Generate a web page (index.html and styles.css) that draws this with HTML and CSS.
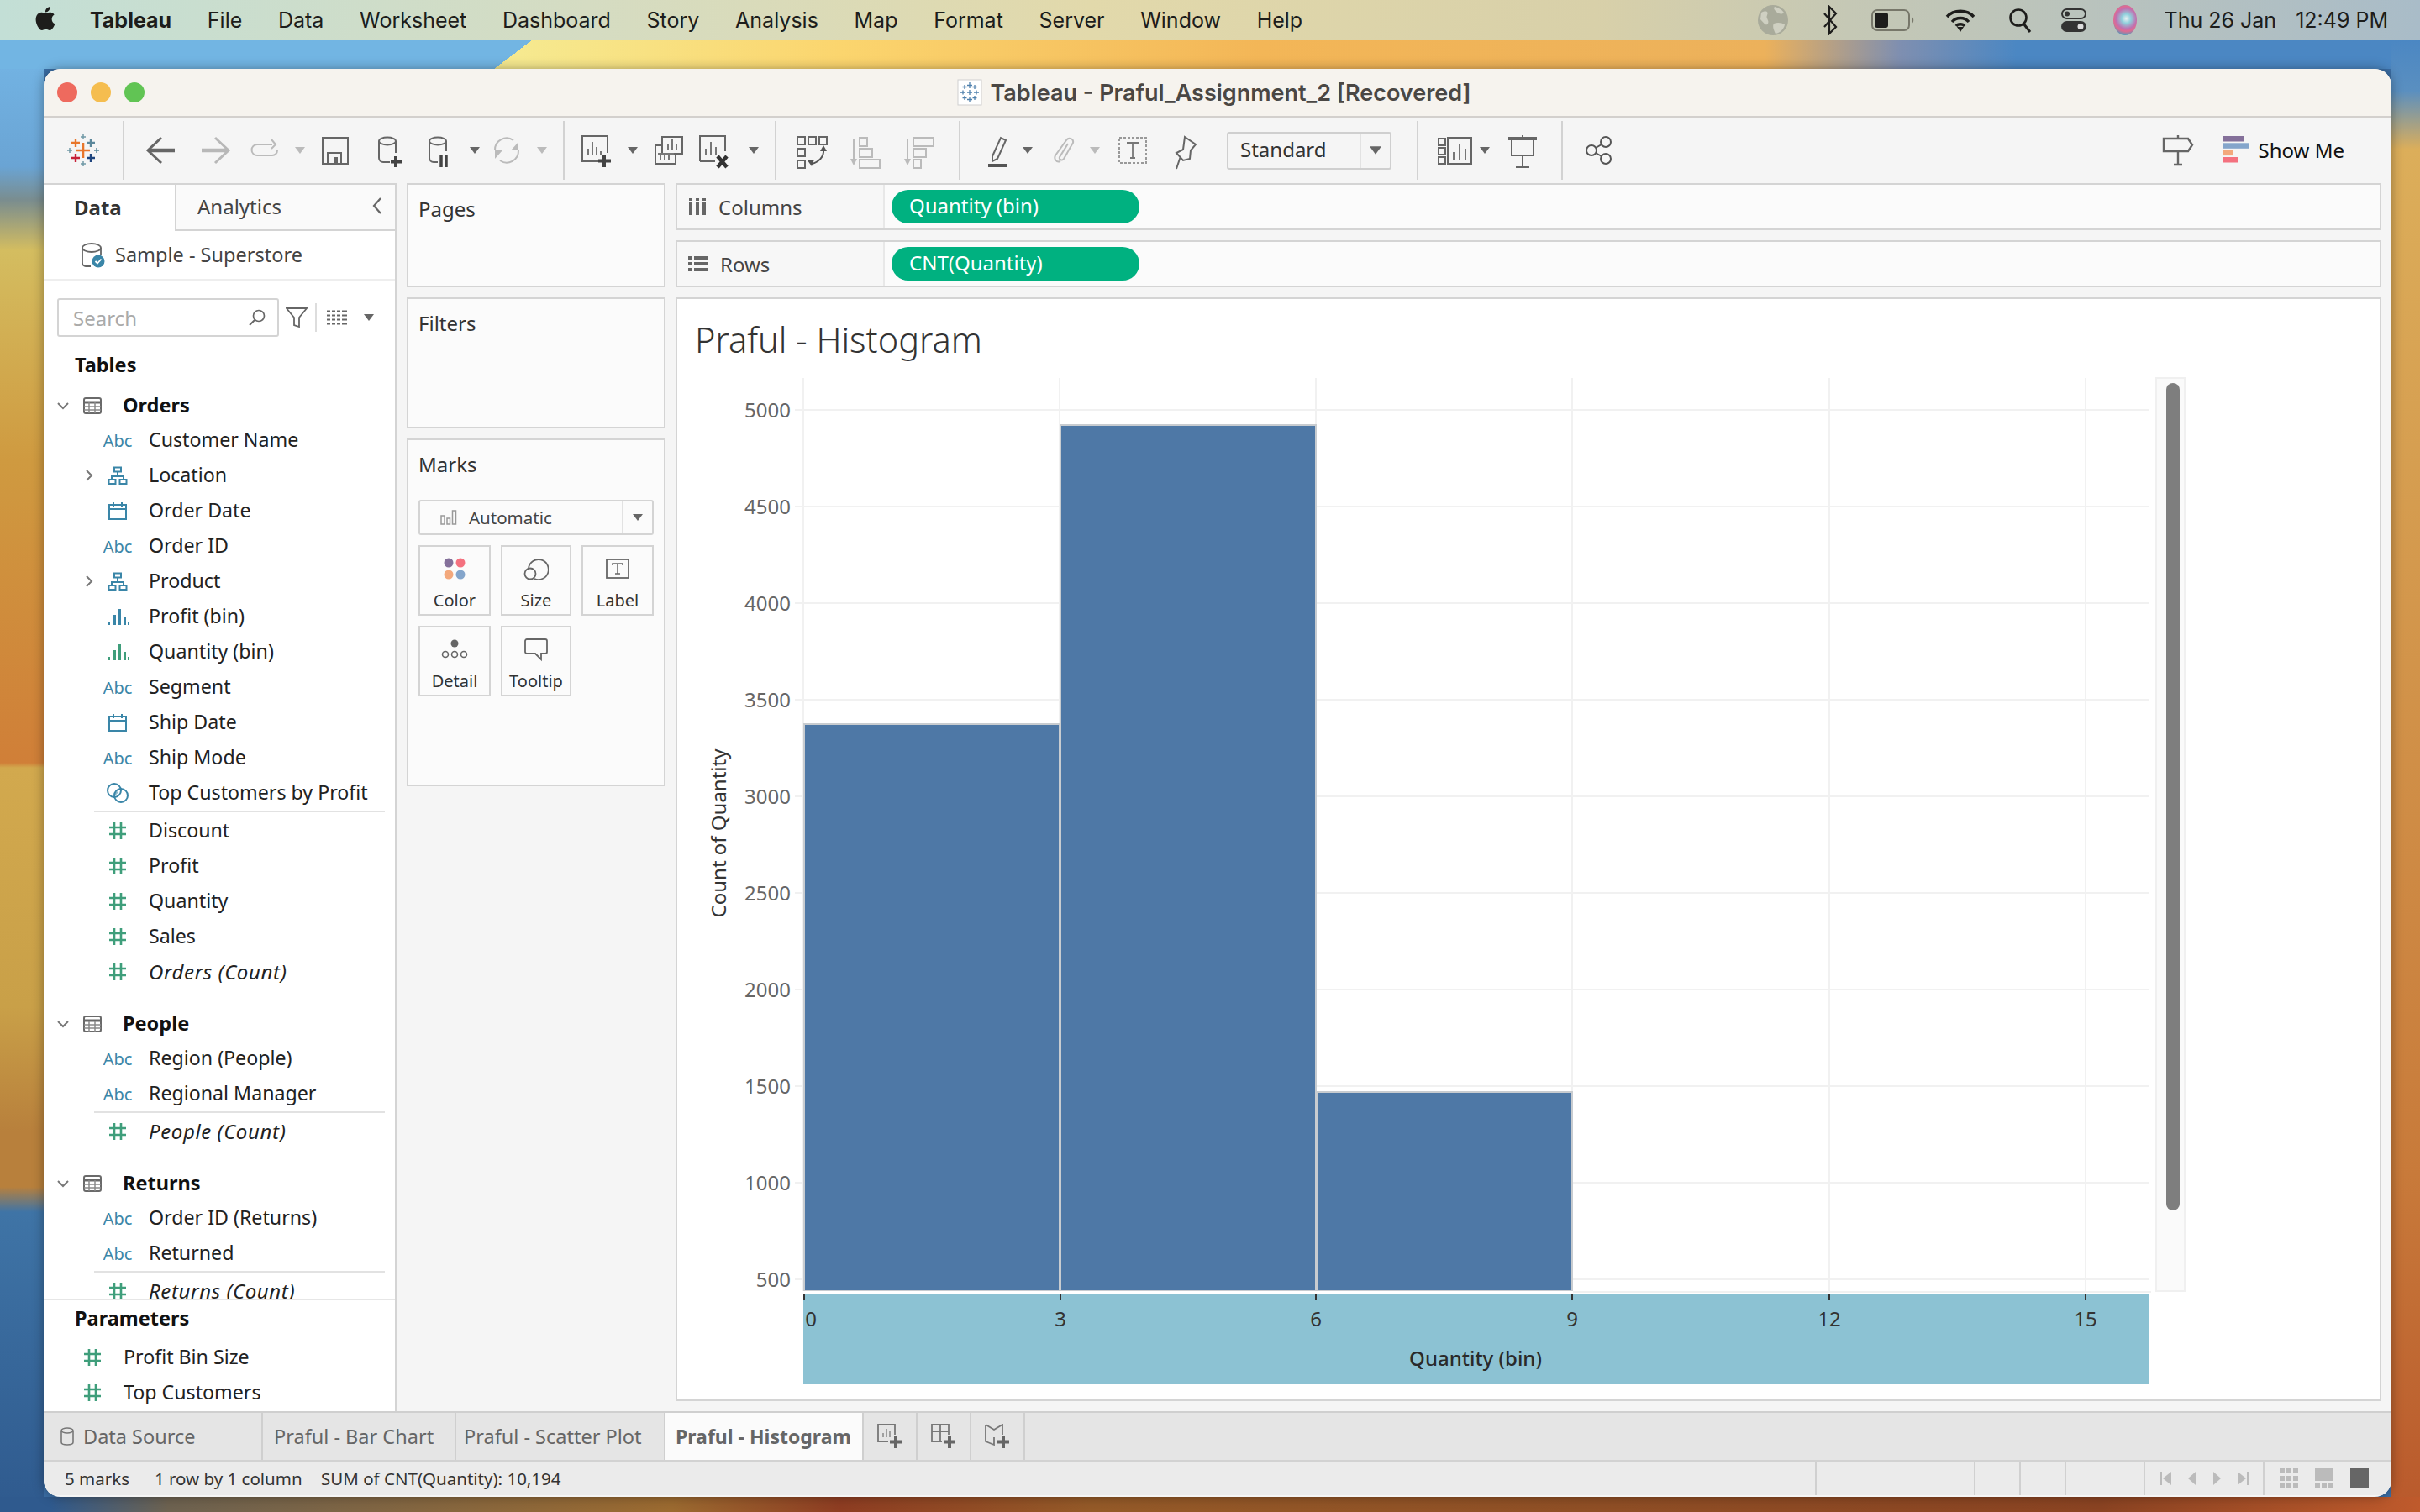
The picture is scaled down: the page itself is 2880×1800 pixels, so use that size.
FILE: index.html
```html
<!DOCTYPE html>
<html>
<head>
<meta charset="utf-8">
<title>Tableau - Praful_Assignment_2 [Recovered]</title>
<link rel="stylesheet" href="styles.css">
</head>
<body>

<!-- shared icons -->
<svg class="defs" width="0" height="0">
	<symbol id="hash" viewBox="0 0 24 24"><path d="M8 2v20M16 2v20M2 8h20M2 16h20" fill="none" stroke="#3f9e7b" stroke-width="2.6"/></symbol>
	<symbol id="tree" viewBox="0 0 24 24"><path d="M12 8v5M5 17v-4h14v4" fill="none" stroke="#3a86a8" stroke-width="2"/><path d="M8 2.5h8v5H8zM1.5 17h8v5h-8zM14.5 17h8v5h-8z" fill="none" stroke="#3a86a8" stroke-width="2"/></symbol>
	<symbol id="cal" viewBox="0 0 24 24"><path d="M2 5h20v17H2zM2 10h20M7 2v5M17 2v5" fill="none" stroke="#3a86a8" stroke-width="2"/></symbol>
	<symbol id="binblue" viewBox="0 0 28 20"><path d="M2 16v4h3v-4zM9 8v12h3V8zM15 1v19h3V1zM21 10v10h3V10zM26 16v4h2v-4z" fill="#3a86a8"/></symbol>
	<symbol id="bingreen" viewBox="0 0 28 20"><path d="M2 16v4h3v-4zM9 8v12h3V8zM15 1v19h3V1zM21 10v10h3V10zM26 16v4h2v-4z" fill="#3f9e7b"/></symbol>
	<symbol id="sets" viewBox="0 0 28 24"><path d="M15 10a7 7 0 0 0-6 5 7 7 0 0 0 6-5z" fill="#8fb9cc"/><circle cx="10" cy="9" r="8" fill="none" stroke="#3a86a8" stroke-width="2"/><circle cx="18" cy="15" r="8" fill="none" stroke="#3a86a8" stroke-width="2"/></symbol>
	<symbol id="table" viewBox="0 0 22 20"><rect x="1" y="1" width="20" height="18" rx="2" fill="none" stroke="#6a6a6a" stroke-width="2"/><path d="M1 6h20" stroke="#6a6a6a" stroke-width="3"/><path d="M1 11h20M1 15h20M7 6v13M14 6v13" stroke="#8a8a8a" stroke-width="1.5"/></symbol>
	<symbol id="chevd" viewBox="0 0 14 10"><path d="M1 2l6 6 6-6" fill="none" stroke="#777" stroke-width="2"/></symbol>
	<symbol id="chevr" viewBox="0 0 10 14"><path d="M2 1l6 6-6 6" fill="none" stroke="#777" stroke-width="2"/></symbol>
	<symbol id="caret" viewBox="0 0 12 10"><path d="M0 1h12L6 9z" fill="#666"/></symbol>
	<symbol id="caretoff" viewBox="0 0 12 10"><path d="M0 1h12L6 9z" fill="#bbb"/></symbol>
</svg>

<header class="menubar">
	<svg class="apple" width="28" height="32" viewBox="0 0 24 24"><path fill="#1d1d1b" d="M12.152 6.896c-.948 0-2.415-1.078-3.96-1.04-2.04.027-3.91 1.183-4.961 3.014-2.117 3.675-.546 9.103 1.519 12.09 1.013 1.454 2.208 3.09 3.792 3.039 1.52-.065 2.09-.987 3.935-.987 1.831 0 2.35.987 3.96.948 1.637-.026 2.676-1.48 3.676-2.948 1.156-1.688 1.636-3.325 1.662-3.415-.039-.013-3.182-1.221-3.22-4.857-.026-3.04 2.48-4.494 2.597-4.559-1.429-2.09-3.623-2.324-4.39-2.376-2-.156-3.675 1.09-4.61 1.09zM15.53 3.83c.843-1.012 1.4-2.427 1.245-3.83-1.207.052-2.662.805-3.532 1.818-.78.896-1.454 2.338-1.273 3.714 1.338.104 2.715-.688 3.559-1.701"/></svg>
	<nav class="menus">
		<b>Tableau</b><span>File</span><span>Data</span><span>Worksheet</span><span>Dashboard</span><span>Story</span><span>Analysis</span><span>Map</span><span>Format</span><span>Server</span><span>Window</span><span>Help</span>
	</nav>
	<div class="tray">
		<svg width="40" height="38" viewBox="-20 -19 40 38"><circle r="18" fill="#a9ab9b"/><path d="M-14-9c6-3 9-1 7 3s3 6 1 10-6-2-9-5zM2-16c4 1 8 3 11 7-3 3-7 1-9-1s-4-4-2-6zM1 4c5-2 9-1 13 1-1 6-6 10-11 11-2-4-4-9-2-12z" fill="#cfd0c2"/></svg>
		<svg class="t-bt" width="18" height="36" viewBox="-9 -18 18 36"><path d="M-7-8L7 8-1 16v-32L7-8-7 8" fill="none" stroke="#1d1d1b" stroke-width="2.2"/></svg>
		<svg class="t-bat" width="52" height="26" viewBox="0 0 52 26"><rect x="1" y="1" width="44" height="24" rx="6" fill="none" stroke="#77776a" stroke-width="2"/><rect x="4" y="4" width="16" height="18" rx="3" fill="#1d1d1b"/><path d="M48 9c3 1 3 7 0 8z" fill="#77776a"/></svg>
		<svg class="t-wifi" width="36" height="28" viewBox="-18 -14 36 28"><path d="M-16-4C-8-13 8-13 16-4M-10 2C-5-4 5-4 10 2M-5 7c2-3 8-3 10 0" fill="none" stroke="#1d1d1b" stroke-width="3.4"/><path d="M0 14l-4-6h8z" fill="#1d1d1b"/></svg>
		<svg class="t-find" width="28" height="30" viewBox="0 0 28 30"><circle cx="12" cy="12" r="9.5" fill="none" stroke="#1d1d1b" stroke-width="2.6"/><path d="M18 19l8 10" stroke="#1d1d1b" stroke-width="3"/></svg>
		<svg class="t-ctl" width="30" height="28" viewBox="0 0 30 28"><rect x="1" y="1" width="28" height="11" rx="5.5" fill="none" stroke="#333" stroke-width="2"/><circle cx="7" cy="6.5" r="3" fill="#333"/><rect x="0" y="15" width="30" height="13" rx="6.5" fill="#333"/><circle cx="23" cy="21.5" r="3.5" fill="#ddd"/></svg>
		<span class="siri"></span>
		<span class="clock">Thu 26 Jan</span>
		<span class="clock c2">12:49 PM</span>
	</div>
</header>

<div class="window">
	<div class="titlebar">
		<div class="lights"><i class="red"></i><i class="amber"></i><i class="green"></i></div>
		<svg class="doc" width="30" height="32" viewBox="-15 -16 30 32"><rect x="-14" y="-15" width="28" height="30" fill="#fff" stroke="#cfcfcf"/><path d="M0-12v7M-3-8.5h6M0 5v7M-3 8.5h6M-8-2.5v5M-11 0h6M8-2.5v5M5 0h6M-6-9v5M-8.5-6.5h5M6-9v5M3.5-6.5h5M-6 4v5M-8.5 6.5h5M6 4v5M3.5 6.5h5M0-3v6M-3 0h6" stroke="#4f81ad" stroke-width="1.3" fill="none"/></svg>
		<span class="wintitle">Tableau - Praful_Assignment_2 [Recovered]</span>
	</div>

	<div class="toolbar">
		<div class="tg tg-logo">
			<svg width="40" height="40" viewBox="-20 -20 40 40">
				<path d="M0-9V9M-8 0H8" stroke="#e8762b" stroke-width="2.6"/>
				<path d="M-9-14v10M-14-9h10" stroke="#e8762b" stroke-width="2.4"/>
				<path d="M9-14V-4M4-9h10" stroke="#5b879b" stroke-width="2.4"/>
				<path d="M-9 4v10M-14 9h10" stroke="#c72037" stroke-width="2.4"/>
				<path d="M9 4v10M4 9h10" stroke="#1f457e" stroke-width="2.4"/>
				<path d="M0-19v6M-3-16h6M0 13v6M-3 16h6" stroke="#7099a6" stroke-width="1.5"/>
				<path d="M-16-3V3M-19 0h6" stroke="#7099a6" stroke-width="1.5"/>
				<path d="M16-3V3M13 0h6" stroke="#59879b" stroke-width="1.5"/>
			</svg>
		</div>
		<i class="tsep"></i>
		<div class="tg tg-history">
			<svg width="64" height="48" viewBox="-32 -24 64 48"><path d="M-14 0H16" stroke="#666" stroke-width="4.5"/><path d="M0-15L-16 0 0 15" fill="none" stroke="#666" stroke-width="3"/></svg>
			<svg width="64" height="48" viewBox="-32 -24 64 48"><path d="M-16 0H14" stroke="#b8b8b8" stroke-width="4.5"/><path d="M0-15L16 0 0 15" fill="none" stroke="#b8b8b8" stroke-width="3"/></svg>
			<svg width="54" height="48" viewBox="-27 -24 54 48"><path d="M2-7h-11a6 6 0 0 0 0 13H9a6 6 0 0 0 6-6" fill="none" stroke="#bbb" stroke-width="2"/><path d="M8-13l5 6-5 5" fill="none" stroke="#bbb" stroke-width="2"/><path d="M-5-7H9" stroke="#bbb" stroke-width="2"/></svg>
			<svg width="30" height="14" viewBox="0 0 30 14"><use href="#caretoff" x="9" y="2" width="12" height="10"/></svg>
			<svg width="54" height="48" viewBox="-27 -24 54 48"><path d="M-15-15H15V16H-15z" fill="none" stroke="#666" stroke-width="2"/><path d="M-9 16V3H7V16" fill="none" stroke="#666" stroke-width="2"/><path d="M-2 8h5v8h-5z" fill="#666"/></svg>
			<svg width="72" height="48" viewBox="-36 -24 72 48"><ellipse cx="-1" cy="-11" rx="10" ry="4.5" fill="none" stroke="#666" stroke-width="2"/><path d="M-11-11V9a5 5 0 0 0 5 5H2M9-11V3" fill="none" stroke="#666" stroke-width="2"/><path d="M9 7v13M3 13.5h13" stroke="#444" stroke-width="4"/></svg>
			<svg width="50" height="48" viewBox="-25 -24 50 48"><ellipse cx="-2" cy="-11" rx="10" ry="4.5" fill="none" stroke="#666" stroke-width="2"/><path d="M-12-11V9a5 5 0 0 0 5 5h5M8-11V1" fill="none" stroke="#666" stroke-width="2"/><path d="M2 5v15M8 5v15" stroke="#444" stroke-width="3.5"/></svg>
			<svg width="34" height="14" viewBox="0 0 34 14"><use href="#caret" x="11" y="2" width="12" height="10"/></svg>
			<svg width="42" height="48" viewBox="-21 -24 42 48"><path d="M-14 0a14 14 0 0 1 22-12M14 0a14 14 0 0 1-22 12" fill="none" stroke="#bbb" stroke-width="2"/><path d="M14-10v10H5zM-14 10V0h9z" fill="#bbb"/></svg>
			<svg width="42" height="14" viewBox="0 0 42 14"><use href="#caretoff" x="15" y="2" width="12" height="10"/></svg>
		</div>
		<i class="tsep"></i>
		<div class="tg tg-sheet">
			<svg width="48" height="48" viewBox="-24 -24 48 48"><path d="M6 13h-21v-30H15V3" fill="none" stroke="#666" stroke-width="2"/><path d="M-8 6V-2M-3 6V-10M2 6V-4M7 6V1" stroke="#777" stroke-width="2"/><path d="M11 5v15M4 12.5h15" stroke="#444" stroke-width="4"/></svg>
			<svg width="42" height="14" viewBox="0 0 42 14"><use href="#caret" x="15" y="2" width="12" height="10"/></svg>
			<svg width="44" height="48" viewBox="-22 -24 44 48"><rect x="-8" y="-16" width="24" height="20" fill="#f5f5f5" stroke="#666" stroke-width="2"/><path d="M-1 0v-8M4 0v-13M9 0v-7" stroke="#777" stroke-width="2"/><path d="M-8-6h-8V16H8V6" fill="none" stroke="#666" stroke-width="2"/><path d="M-13 4H6M-10 6v5M-5 6v5M0 6v5" stroke="#777" stroke-width="2"/></svg>
			<svg width="60" height="48" viewBox="-30 -24 60 48"><path d="M-15 13v-30H15V1M-15 13H3" fill="none" stroke="#666" stroke-width="2"/><path d="M-8 6V-2M-2 6V-10M4 6V-4" stroke="#777" stroke-width="2"/><path d="M6 7l11 13M17 7L6 20" stroke="#333" stroke-width="4.5"/></svg>
			<svg width="38" height="14" viewBox="0 0 38 14"><use href="#caret" x="13" y="2" width="12" height="10"/></svg>
		</div>
		<i class="tsep"></i>
		<div class="tg tg-sort">
			<svg width="64" height="48" viewBox="-32 -24 64 48"><rect x="-17" y="-16" width="9" height="9" fill="none" stroke="#666" stroke-width="2"/><rect x="-17" y="-2" width="9" height="9" fill="none" stroke="#666" stroke-width="2"/><rect x="-17" y="12" width="9" height="9" fill="none" stroke="#666" stroke-width="2"/><rect x="-4" y="-16" width="9" height="9" fill="none" stroke="#666" stroke-width="2"/><rect x="9" y="-16" width="9" height="9" fill="none" stroke="#666" stroke-width="2"/><path d="M14-1c1 9-6 15-14 17" fill="none" stroke="#555" stroke-width="2"/><path d="M10 1l4-7 4 7zM-5 12l8-1-3 8z" fill="#555"/></svg>
			<svg width="68" height="48" viewBox="-34 -24 68 48"><path d="M-16-14V12" stroke="#bbb" stroke-width="2"/><path d="M-20 10h8l-4 8z" fill="#bbb"/><rect x="-9" y="-15" width="9" height="10" fill="none" stroke="#bbb" stroke-width="2"/><rect x="-9" y="-2" width="15" height="10" fill="none" stroke="#bbb" stroke-width="2"/><rect x="-9" y="11" width="24" height="10" fill="none" stroke="#bbb" stroke-width="2"/></svg>
			<svg width="60" height="48" viewBox="-30 -24 60 48"><path d="M-16-14V12" stroke="#bbb" stroke-width="2"/><path d="M-20 10h8l-4 8z" fill="#bbb"/><rect x="-9" y="-15" width="24" height="10" fill="none" stroke="#bbb" stroke-width="2"/><rect x="-9" y="-2" width="15" height="10" fill="none" stroke="#bbb" stroke-width="2"/><rect x="-9" y="11" width="9" height="10" fill="none" stroke="#bbb" stroke-width="2"/></svg>
		</div>
		<i class="tsep"></i>
		<div class="tg tg-format">
			<svg width="42" height="48" viewBox="-21 -24 42 48"><path d="M-6 7L4-15l6 3-10 22-6 3z" fill="none" stroke="#666" stroke-width="2"/><path d="M-11 18H11" stroke="#555" stroke-width="4"/></svg>
			<svg width="30" height="14" viewBox="0 0 30 14"><use href="#caret" x="9" y="2" width="12" height="10"/></svg>
			<svg width="56" height="48" viewBox="-28 -24 56 48"><path d="M-4 13C-9 15-12 10-10 6L3-12C6-16 12-14 11-9L0 10C-2 13-6 11-5 8L5-8" fill="none" stroke="#bbb" stroke-width="2"/></svg>
			<svg width="18" height="14" viewBox="0 0 18 14"><use href="#caretoff" x="3" y="2" width="12" height="10"/></svg>
			<svg width="72" height="48" viewBox="-36 -24 72 48"><rect x="-16" y="-15" width="32" height="30" fill="none" stroke="#999" stroke-width="2" stroke-dasharray="3 2"/><path d="M-7-9H7M0-9V9M-3 9h6" fill="none" stroke="#777" stroke-width="1.8"/></svg>
			<svg width="56" height="48" viewBox="-28 -24 56 48"><path d="M-2-16L11-7 5 0 4 10-4 12-12 3-4-1zM-7 7L-12 22" fill="none" stroke="#666" stroke-width="2"/></svg>
			<div class="fitbox"><span>Standard</span><b><svg width="14" height="12"><use href="#caret" width="14" height="12"/></svg></b></div>
		</div>
		<i class="tsep"></i>
		<div class="tg tg-show">
			<svg width="48" height="48" viewBox="-24 -24 48 48"><rect x="-20" y="-14" width="8" height="8" fill="none" stroke="#666" stroke-width="2"/><rect x="-20" y="-3" width="8" height="8" fill="none" stroke="#666" stroke-width="2"/><rect x="-20" y="8" width="8" height="8" fill="none" stroke="#666" stroke-width="2"/><rect x="-9" y="-15" width="28" height="31" fill="none" stroke="#666" stroke-width="2"/><path d="M-2 11V2M5 11V-8M12 11V-2" stroke="#777" stroke-width="2"/></svg>
			<svg width="22" height="14" viewBox="0 0 22 14"><use href="#caret" x="5" y="2" width="12" height="10"/></svg>
			<svg width="68" height="48" viewBox="-34 -24 68 48"><path d="M-17-14H17" stroke="#666" stroke-width="4"/><path d="M0-18v4M-13-14V6H13V-14M0 6V19M-8 20H8" fill="none" stroke="#666" stroke-width="2"/></svg>
		</div>
		<i class="tsep"></i>
		<div class="tg tg-share">
			<svg width="60" height="48" viewBox="-30 -24 60 48"><circle cx="-9" cy="0" r="6" fill="none" stroke="#555" stroke-width="2"/><circle cx="8" cy="-10" r="6" fill="none" stroke="#555" stroke-width="2"/><circle cx="8" cy="10" r="6" fill="none" stroke="#555" stroke-width="2"/><path d="M-4-3L3-7M-4 3L3 7" stroke="#555" stroke-width="2"/></svg>
		</div>
		<div class="tg tg-right">
			<svg width="60" height="48" viewBox="-30 -24 60 48"><path d="M0-18v4M0 1V17M-5 17H5" fill="none" stroke="#666" stroke-width="2.4"/><path d="M-17-14H12l5 7.5-5 7.5H-17z" fill="none" stroke="#666" stroke-width="2.4"/></svg>
			<div class="showme">
				<svg width="32" height="32" viewBox="0 0 32 32"><rect width="25" height="6.5" fill="#84709a"/><rect y="8.3" width="32" height="6.5" fill="#84a5cb"/><rect y="16.6" width="13" height="6.5" fill="#f3a87c"/><rect y="25" width="19" height="6.5" fill="#f4717f"/></svg>
				<span>Show Me</span>
			</div>
		</div>
	</div>

	<div class="work">
		<aside class="datapane">
			<div class="panetabs">
				<div class="ptab on">Data</div>
				<div class="ptab">Analytics<svg width="12" height="22" viewBox="0 0 12 22"><path d="M10 2L2 11l8 9" fill="none" stroke="#666" stroke-width="2.2"/></svg></div>
			</div>
			<div class="source">
				<svg width="28" height="30" viewBox="0 0 28 30"><ellipse cx="12" cy="6" rx="11" ry="5" fill="none" stroke="#666" stroke-width="1.8"/><path d="M1 6v18a4 4 0 0 0 4 4h6M23 6v8" fill="none" stroke="#666" stroke-width="1.8"/><circle cx="20" cy="22" r="7.5" fill="#3a86a8"/><path d="M16.5 22l2.5 2.5 4.5-5" fill="none" stroke="#fff" stroke-width="1.8"/></svg>
				<span>Sample - Superstore</span>
			</div>
			<div class="findrow">
				<div class="searchbox"><span>Search</span><svg width="20" height="20" viewBox="0 0 20 20"><circle cx="12" cy="8" r="6.5" fill="none" stroke="#666" stroke-width="1.7"/><path d="M7 13l-6 6" stroke="#666" stroke-width="2"/></svg></div>
				<svg class="f-filter" width="26" height="26" viewBox="0 0 26 26"><path d="M1 2h24L16 13v11l-6-2V13z" fill="none" stroke="#666" stroke-width="1.8"/></svg>
				<i class="f-sep"></i>
				<svg class="f-list" width="24" height="18" viewBox="0 0 24 18"><path d="M0 1.5h4M6 1.5h4M12 1.5h4M18 1.5h6M0 6.5h4M6 6.5h4M12 6.5h4M18 6.5h6M0 11.5h4M6 11.5h4M12 11.5h4M18 11.5h6M0 16.5h4M6 16.5h4M12 16.5h4M18 16.5h6" stroke="#666" stroke-width="2"/></svg>
				<svg class="f-caret" width="14" height="10"><use href="#caret" width="14" height="10"/></svg>
			</div>

			<div class="fields">
				<h4 class="grouphead">Tables</h4>

				<div class="tablehead"><svg class="ch" width="14" height="10"><use href="#chevd" width="14" height="10"/></svg><svg class="tic" width="22" height="20"><use href="#table" width="22" height="20"/></svg><b>Orders</b></div>
				<div class="field"><i class="ch"></i><span class="ic abc">Abc</span><span>Customer Name</span></div>
				<div class="field"><i class="ch"><svg width="10" height="14"><use href="#chevr" width="10" height="14"/></svg></i><span class="ic"><svg width="24" height="24"><use href="#tree" width="24" height="24"/></svg></span><span>Location</span></div>
				<div class="field"><i class="ch"></i><span class="ic"><svg width="24" height="24"><use href="#cal" width="24" height="24"/></svg></span><span>Order Date</span></div>
				<div class="field"><i class="ch"></i><span class="ic abc">Abc</span><span>Order ID</span></div>
				<div class="field"><i class="ch"><svg width="10" height="14"><use href="#chevr" width="10" height="14"/></svg></i><span class="ic"><svg width="24" height="24"><use href="#tree" width="24" height="24"/></svg></span><span>Product</span></div>
				<div class="field"><i class="ch"></i><span class="ic"><svg width="28" height="20"><use href="#binblue" width="28" height="20"/></svg></span><span>Profit (bin)</span></div>
				<div class="field"><i class="ch"></i><span class="ic"><svg width="28" height="20"><use href="#bingreen" width="28" height="20"/></svg></span><span>Quantity (bin)</span></div>
				<div class="field"><i class="ch"></i><span class="ic abc">Abc</span><span>Segment</span></div>
				<div class="field"><i class="ch"></i><span class="ic"><svg width="24" height="24"><use href="#cal" width="24" height="24"/></svg></span><span>Ship Date</span></div>
				<div class="field"><i class="ch"></i><span class="ic abc">Abc</span><span>Ship Mode</span></div>
				<div class="field"><i class="ch"></i><span class="ic"><svg width="28" height="24"><use href="#sets" width="28" height="24"/></svg></span><span>Top Customers by Profit</span></div>
				<hr class="rule">
				<div class="field"><i class="ch"></i><span class="ic"><svg width="24" height="24"><use href="#hash" width="24" height="24"/></svg></span><span>Discount</span></div>
				<div class="field"><i class="ch"></i><span class="ic"><svg width="24" height="24"><use href="#hash" width="24" height="24"/></svg></span><span>Profit</span></div>
				<div class="field"><i class="ch"></i><span class="ic"><svg width="24" height="24"><use href="#hash" width="24" height="24"/></svg></span><span>Quantity</span></div>
				<div class="field"><i class="ch"></i><span class="ic"><svg width="24" height="24"><use href="#hash" width="24" height="24"/></svg></span><span>Sales</span></div>
				<div class="field calc"><i class="ch"></i><span class="ic"><svg width="24" height="24"><use href="#hash" width="24" height="24"/></svg></span><span>Orders (Count)</span></div>

				<div class="tablehead next"><svg class="ch" width="14" height="10"><use href="#chevd" width="14" height="10"/></svg><svg class="tic" width="22" height="20"><use href="#table" width="22" height="20"/></svg><b>People</b></div>
				<div class="field"><i class="ch"></i><span class="ic abc">Abc</span><span>Region (People)</span></div>
				<div class="field"><i class="ch"></i><span class="ic abc">Abc</span><span>Regional Manager</span></div>
				<hr class="rule">
				<div class="field calc"><i class="ch"></i><span class="ic"><svg width="24" height="24"><use href="#hash" width="24" height="24"/></svg></span><span>People (Count)</span></div>

				<div class="tablehead next"><svg class="ch" width="14" height="10"><use href="#chevd" width="14" height="10"/></svg><svg class="tic" width="22" height="20"><use href="#table" width="22" height="20"/></svg><b>Returns</b></div>
				<div class="field"><i class="ch"></i><span class="ic abc">Abc</span><span>Order ID (Returns)</span></div>
				<div class="field"><i class="ch"></i><span class="ic abc">Abc</span><span>Returned</span></div>
				<hr class="rule">
				<div class="field calc"><i class="ch"></i><span class="ic"><svg width="24" height="24"><use href="#hash" width="24" height="24"/></svg></span><span>Returns (Count)</span></div>
			</div>

			<div class="params">
				<h4 class="grouphead">Parameters</h4>
				<div class="param"><svg width="24" height="24"><use href="#hash" width="24" height="24"/></svg><span>Profit Bin Size</span></div>
				<div class="param"><svg width="24" height="24"><use href="#hash" width="24" height="24"/></svg><span>Top Customers</span></div>
			</div>
		</aside>

		<section class="cards">
			<div class="card c-pages">Pages</div>
			<div class="card c-filters">Filters</div>
			<div class="card c-marks">
				Marks
				<div class="marktype">
					<svg width="20" height="18" viewBox="0 0 20 18"><rect x="1" y="7" width="4" height="10" fill="none" stroke="#999" stroke-width="1.5"/><rect x="8" y="10" width="3.5" height="7" fill="none" stroke="#999" stroke-width="1.5"/><rect x="14.5" y="1" width="4" height="16" fill="none" stroke="#999" stroke-width="1.5"/></svg>
					<span>Automatic</span>
					<b><svg width="14" height="10"><use href="#caret" width="14" height="10"/></svg></b>
				</div>
				<div class="markgrid">
					<div class="mbtn">
						<svg width="28" height="28" viewBox="0 0 28 28"><circle cx="7" cy="7" r="5.5" fill="#84709a"/><circle cx="21" cy="7" r="5.5" fill="#f4717f"/><circle cx="7" cy="21" r="5.5" fill="#f3a87c"/><circle cx="21" cy="21" r="5.5" fill="#84a5cb"/></svg>
						<span>Color</span>
					</div>
					<div class="mbtn">
						<svg width="30" height="28" viewBox="0 0 30 28"><path d="M6 13a12 12 0 1 1 7 13" fill="none" stroke="#666" stroke-width="1.8"/><circle cx="8" cy="20" r="6.5" fill="none" stroke="#666" stroke-width="1.8"/></svg>
						<span>Size</span>
					</div>
					<div class="mbtn">
						<svg width="28" height="24" viewBox="0 0 28 24"><rect x="1" y="1" width="26" height="22" fill="none" stroke="#666" stroke-width="1.8"/><path d="M8 8V6h12v2M14 6v12M11 18h6" fill="none" stroke="#666" stroke-width="1.5"/></svg>
						<span>Label</span>
					</div>
					<div class="mbtn">
						<svg width="32" height="24" viewBox="0 0 32 24"><circle cx="16" cy="5" r="4.5" fill="#666"/><circle cx="5" cy="18" r="3.5" fill="none" stroke="#666" stroke-width="1.6"/><circle cx="16" cy="18" r="3.5" fill="none" stroke="#666" stroke-width="1.6"/><circle cx="27" cy="18" r="3.5" fill="none" stroke="#666" stroke-width="1.6"/></svg>
						<span>Detail</span>
					</div>
					<div class="mbtn">
						<svg width="28" height="26" viewBox="0 0 28 26"><path d="M3 1h22a2 2 0 0 1 2 2v13a2 2 0 0 1-2 2h-5v7l-7-7H3a2 2 0 0 1-2-2V3a2 2 0 0 1 2-2z" fill="none" stroke="#666" stroke-width="1.8"/></svg>
						<span>Tooltip</span>
					</div>
				</div>
			</div>
		</section>

		<main class="sheet">
			<div class="shelf">
				<div class="shelfname">
					<svg width="22" height="20" viewBox="0 0 22 20"><path d="M1 0h4v3H1zM9 0h4v3H9zM17 0h4v3h-4zM1 5h4v15H1zM9 5h4v15H9zM17 5h4v15h-4z" fill="#666"/></svg>
					<span>Columns</span>
				</div>
				<div class="pill">Quantity (bin)</div>
			</div>
			<div class="shelf">
				<div class="shelfname">
					<svg width="24" height="20" viewBox="0 0 24 20"><path d="M0 1h4v4H0zM7 1h17v4H7zM0 8h4v4H0zM7 8h17v4H7zM0 15h4v4H0zM7 15h17v4H7z" fill="#666"/></svg>
					<span>Rows</span>
				</div>
				<div class="pill">CNT(Quantity)</div>
			</div>
			<div class="viz">
				<h1 class="viztitle">Praful - Histogram</h1>
				<!-- chart is drawn in page coordinates -->
				<svg class="chart" width="2026" height="1226" viewBox="806 440 2026 1226">
					<g class="grid">
						<path d="M956 450V1537M1261 450V1537M1566 450V1537M1871 450V1537M2177 450V1537M2482 450V1537"/>
						<path d="M946 488H2558M946 603H2558M946 718H2558M946 833H2558M946 948H2558M946 1063H2558M946 1178H2558M946 1293H2558M946 1408H2558M946 1523H2558"/>
						<path d="M956 1538H2560"/>
					</g>
					<g class="bars">
						<rect x="957" y="862" width="304" height="675"/>
						<rect x="1262" y="506" width="304" height="1031"/>
						<rect x="1567" y="1300" width="304" height="237"/>
					</g>
					<path class="barbase" d="M956 1538.5H1872"/>
					<g class="yticks">
						<text x="941" y="497">5000</text>
						<text x="941" y="612">4500</text>
						<text x="941" y="727">4000</text>
						<text x="941" y="842">3500</text>
						<text x="941" y="957">3000</text>
						<text x="941" y="1072">2500</text>
						<text x="941" y="1187">2000</text>
						<text x="941" y="1302">1500</text>
						<text x="941" y="1417">1000</text>
						<text x="941" y="1532">500</text>
					</g>
					<text class="ytitle" transform="translate(864 992) rotate(-90)">Count of Quantity</text>
					<rect class="band" x="956" y="1540" width="1602" height="108"/>
					<path class="ticks" d="M957 1540v8M1262 1540v8M1566 1540v8M1871 1540v8M2177 1540v8M2482 1540v8"/>
					<g class="xticks">
						<text x="965" y="1579">0</text>
						<text x="1262" y="1579">3</text>
						<text x="1566" y="1579">6</text>
						<text x="1871" y="1579">9</text>
						<text x="2177" y="1579">12</text>
						<text x="2482" y="1579">15</text>
					</g>
					<text class="xtitle" x="1756" y="1626">Quantity (bin)</text>
					<rect class="track" x="2566" y="450" width="34" height="1087"/>
					<rect class="thumb" x="2578" y="456" width="16" height="985" rx="8"/>
				</svg>
			</div>
		</main>
	</div>

	<div class="tabbar">
		<div class="tab t-ds"><svg width="16" height="22" viewBox="0 0 16 22"><ellipse cx="8" cy="4" rx="7" ry="3" fill="none" stroke="#777" stroke-width="1.6"/><path d="M1 4v14c0 2 3 3 7 3s7-1 7-3V4" fill="none" stroke="#777" stroke-width="1.6"/></svg>Data Source</div>
		<div class="tab t-bar">Praful - Bar Chart</div>
		<div class="tab t-scatter">Praful - Scatter Plot</div>
		<div class="tab t-hist">Praful - Histogram</div>
		<div class="tab t-add"><svg width="30" height="30" viewBox="0 0 30 30"><path d="M13 21H1V1h20v12" fill="none" stroke="#777" stroke-width="1.8"/><path d="M7 16v-5M11 16V6M15 16V9" stroke="#888" stroke-width="1.5"/><path d="M22 14v15M15 21.5h14" stroke="#666" stroke-width="4"/></svg></div>
		<div class="tab t-add"><svg width="30" height="30" viewBox="0 0 30 30"><path d="M13 21H1V1h20v12M1 9h20M11 1v20" fill="none" stroke="#777" stroke-width="1.8"/><path d="M22 14v15M15 21.5h14" stroke="#666" stroke-width="4"/></svg></div>
		<div class="tab t-add"><svg width="30" height="30" viewBox="0 0 30 30"><path d="M1 1v20l10 4V16M21 13V1L11 7 1 1" fill="none" stroke="#777" stroke-width="1.8"/><path d="M22 14v15M15 21.5h14" stroke="#666" stroke-width="4"/></svg></div>
	</div>

	<footer class="status">
		<div class="st-text"><span class="s1">5 marks</span><span class="s2">1 row by 1 column</span><span>SUM of CNT(Quantity): 10,194</span></div>
		<i class="cell c189"></i>
		<i class="cell c54"></i>
		<i class="cell c54"></i>
		<i class="cell c94"></i>
		<div class="cell c142 pager">
			<svg width="14" height="16" viewBox="0 0 14 16"><path d="M0 0h2v16H0zM13 0v16L3 8z" fill="#bbb"/></svg>
			<svg width="10" height="16" viewBox="0 0 10 16"><path d="M9 0v16L0 8z" fill="#bbb"/></svg>
			<svg width="10" height="16" viewBox="0 0 10 16"><path d="M1 0v16l9-8z" fill="#bbb"/></svg>
			<svg width="14" height="16" viewBox="0 0 14 16"><path d="M12 0h2v16h-2zM1 0v16l10-8z" fill="#bbb"/></svg>
		</div>
		<div class="views">
			<svg width="22" height="24" viewBox="0 0 22 24"><path d="M0 0h6v6H0zM8 0h6v6H8zM16 0h6v6h-6zM0 9h6v6H0zM8 9h6v6H8zM16 9h6v6h-6zM0 18h6v6H0zM8 18h6v6H8zM16 18h6v6h-6z" fill="#bbb"/></svg>
			<svg width="22" height="24" viewBox="0 0 22 24"><path d="M0 0h22v15H0zM0 18h6v6H0zM8 18h6v6H8zM16 18h6v6h-6z" fill="#bbb"/></svg>
			<svg width="22" height="24" viewBox="0 0 22 24"><path d="M0 0h22v24H0z" fill="#666"/></svg>
		</div>
	</footer>
</div>

</body>
</html>
```

FILE: styles.css
```css
* {
	margin: 0;
	padding: 0;
	box-sizing: border-box;
}

html, body {
	width: 2880px;
	height: 1800px;
	overflow: hidden;
}

body {
	font-family: "Noto Sans", "Liberation Sans", sans-serif;
	color: #222;
	background-color: #3b6ea5;
	background-image:
		linear-gradient(143deg, #72b5e3 381px, transparent 381px),
		linear-gradient(90deg, #2f5a8e 0, #2f5a8e 60px, #6d6250 200px, #9b6a30 800px, #8e3d22 1000px, #945a28 1300px, #8a4322 2500px, #bf5a2c 2880px),
		linear-gradient(180deg, #74b6e6 0, #6aa4d4 150px, #7a8d8f 190px, #d4bd60 250px, #cf9a40 500px, #d07f38 860px, #d2a94e 866px, #c9a048 1150px, #b8803c 1300px, #b8803c 1365px, #3f74a6 1395px, #2f5a8e 1752px),
		linear-gradient(180deg, #4b87c3 0, #5a8fc0 60px, #dcae5a 130px, #c87a3a 1350px, #b9592c 1752px),
		linear-gradient(90deg, #f6e98f 0, #f6e98f 620px, #fbd56e 1000px, #f3b657 1500px, #ecb15b 2100px, #7f8fb0 2260px, #4b87c3 2400px, #4b87c3 2880px);
	background-repeat: no-repeat;
	background-size: 640px 34px, 2880px 18px, 52px 1752px, 34px 1752px, 2880px 34px;
	background-position: 0 48px, 0 1782px, 0 48px, 2846px 48px, 0 48px;
}

.defs {
	display: block;
	height: 0;
}

/* menu bar */
.menubar {
	height: 48px;
	display: flex;
	align-items: center;
	padding-left: 40px;
	font-family: Inter, "Liberation Sans", sans-serif;
	font-size: 25px;
	color: #1d1d1b;
	background: linear-gradient(90deg, #c3dfd6 0, #d5dcc2 700px, #e2d9ab 1300px, #d8d0a9 1900px, #c5c8b5 2200px, #a9bcc8 2880px);
}

.apple {
	margin-bottom: 4px;
}

.menus {
	display: flex;
	gap: 42.7px;
	margin-left: 39px;
}

.menus b {
	font-weight: 700;
}

.tray {
	margin-left: auto;
	display: flex;
	align-items: center;
	padding-right: 38px;
}

.t-bt { margin-left: 39px; }
.t-bat { margin-left: 40px; }
.t-wifi { margin-left: 36px; }
.t-find { margin-left: 39px; }
.t-ctl { margin-left: 35px; }

.siri {
	width: 28px;
	height: 36px;
	margin-left: 32px;
	border-radius: 50%;
	background: radial-gradient(circle at 55% 45%, #e8f0f2 0, #8fd0dc 22%, #c070b0 48%, #e06a90 60%, #3aa3c2 82%, #5a9fc8 100%);
}

.clock {
	margin-left: 33px;
}

.clock.c2 {
	margin-left: 23px;
}

/* window */
.window {
	width: 2794px;
	height: 1700px;
	margin: 34px 0 0 52px;
	border-radius: 20px;
	overflow: hidden;
	background-color: #f5f5f5;
	box-shadow: 0 0 14px rgba(0, 0, 0, .35);
}

.titlebar {
	height: 58px;
	display: flex;
	align-items: center;
	justify-content: center;
	background-color: #f6f3ee;
	border-bottom: 2px solid #d3d0cd;
	position: relative;
}

.lights {
	position: absolute;
	left: 16px;
	top: 16px;
	display: flex;
	gap: 16px;
}

.lights i {
	width: 24px;
	height: 24px;
	border-radius: 50%;
}

.lights .red { background-color: #ee6a5e; }
.lights .amber { background-color: #f5bd4f; }
.lights .green { background-color: #61c454; }

.wintitle {
	margin: 0 8px 0 9px;
	font-family: Inter, "Liberation Sans", sans-serif;
	font-weight: 600;
	font-size: 27px;
	color: #4a4744;
}

.toolbar {
	height: 78px;
	display: flex;
	align-items: center;
}

.tg {
	height: 70px;
	display: flex;
	align-items: center;
}

.tg-logo { width: 94px; justify-content: center; }
.tg-history { width: 522px; padding-left: 12px; }
.tg-sheet { width: 250px; padding-left: 12px; }
.tg-sort { width: 217px; padding-left: 10px; }
.tg-format { width: 543px; padding-left: 23px; }
.tg-show { width: 170px; padding-left: 20px; }
.tg-share { width: 74px; padding-left: 13px; }

.tg-right {
	margin-left: auto;
	padding-right: 56px;
}

.tsep {
	width: 2px;
	height: 70px;
	background-color: #d2d2d2;
}

.fitbox {
	width: 196px;
	height: 45px;
	margin-left: 20px;
	display: flex;
	align-items: center;
	border: 2px solid #cfcfcf;
	border-radius: 3px;
	font-size: 24px;
	color: #333;
}

.fitbox span {
	flex: 1;
	padding: 0 0 3px 14px;
}

.fitbox b {
	width: 36px;
	height: 100%;
	display: flex;
	align-items: center;
	justify-content: center;
	border-left: 2px solid #e2e2e2;
}

.showme {
	margin-left: 23px;
	display: flex;
	align-items: center;
	gap: 11px;
	padding-bottom: 2px;
	font-size: 24px;
	color: #111;
}

/* work area */
.work {
	height: 1462px;
	display: flex;
}

.datapane {
	width: 420px;
	display: flex;
	flex-direction: column;
	background-color: #fff;
	border-top: 2px solid #d4d4d4;
	border-right: 2px solid #d4d4d4;
}

.panetabs {
	height: 55px;
	display: flex;
	flex-shrink: 0;
}

.ptab {
	display: flex;
	align-items: center;
	padding-bottom: 3px;
	font-size: 24px;
	color: #444;
}

.ptab.on {
	width: 156px;
	padding-left: 36px;
	font-weight: 700;
	color: #333;
}

.ptab:not(.on) {
	flex: 1;
	padding-left: 25px;
	background-color: #fafafa;
	border-left: 2px solid #d4d4d4;
	border-bottom: 2px solid #d4d4d4;
}

.ptab svg {
	margin-left: auto;
	margin-right: 15px;
}

.source {
	height: 59px;
	display: flex;
	align-items: center;
	padding-left: 45px;
	flex-shrink: 0;
	border-bottom: 2px solid #eee;
	font-size: 23.5px;
	color: #444;
}

.source span {
	margin: 0 0 2px 12px;
}

.findrow {
	display: flex;
	align-items: center;
	margin-top: 21px;
	padding-left: 16px;
	flex-shrink: 0;
}

.searchbox {
	width: 264px;
	height: 46px;
	display: flex;
	align-items: center;
	justify-content: space-between;
	padding: 0 14px 0 17px;
	border: 2px solid #d4d4d4;
	border-radius: 3px;
	font-size: 24px;
	color: #aaa;
}

.f-filter { margin-left: 8px; }

.f-sep {
	width: 2px;
	height: 34px;
	margin-left: 9px;
	background-color: #ddd;
}

.f-list { margin-left: 12px; }
.f-caret { margin-left: 19px; }

.fields {
	flex: 1;
	min-height: 0;
	overflow: hidden;
}

.grouphead {
	height: 36px;
	line-height: 36px;
	padding-left: 37px;
	font-size: 23.5px;
	font-weight: 700;
	color: #111;
}

.fields > .grouphead {
	margin: 15px 0 10px;
}

.tablehead {
	height: 41px;
	display: flex;
	align-items: center;
	padding-left: 16px;
	font-size: 23.5px;
}

.tablehead.next {
	margin-top: 20px;
}

.tablehead .tic {
	margin-left: 17px;
}

.tablehead b {
	margin: 0 0 2px 25px;
	color: #111;
	font-weight: 700;
}

.field {
	height: 42px;
	display: flex;
	align-items: center;
	padding-left: 44px;
	font-size: 23.2px;
	white-space: nowrap;
}

.field span:last-child {
	margin-bottom: 2px;
}

.field .ch {
	width: 20px;
	display: flex;
	justify-content: center;
}

.field .ic {
	width: 48px;
	margin-right: 13px;
	display: flex;
	justify-content: center;
}

.field .abc {
	font-size: 20px;
	color: #3a86a8;
}

.field.calc span:last-child {
	font-size: 24px;
	font-style: italic;
	letter-spacing: .6px;
}

.rule {
	height: 2px;
	margin: 0 12px 1px 60px;
	border: none;
	background-color: #e2e2e2;
}

.params {
	height: 134px;
	flex-shrink: 0;
	border-top: 2px solid #e6e6e6;
}

.params .grouphead {
	height: 42px;
	line-height: 42px;
	margin-bottom: 5px;
}

.param {
	height: 42px;
	display: flex;
	align-items: center;
	padding-left: 46px;
	font-size: 23.2px;
}

.param span {
	margin: 0 0 2px 25px;
}

.cards {
	width: 308px;
	margin-left: 12px;
	display: flex;
	flex-direction: column;
	gap: 12px;
}

.card {
	padding: 13px 12px 0;
	border: 2px solid #d4d4d4;
	background-color: #fbfbfb;
	font-size: 24px;
	line-height: 32px;
	color: #333;
}

.c-pages { height: 124px; }
.c-filters { height: 156px; }
.c-marks { height: 414px; }

.marktype {
	height: 42px;
	margin-top: 26px;
	display: flex;
	align-items: center;
	border: 2px solid #d4d4d4;
	border-radius: 3px;
	padding-left: 24px;
	font-size: 20.5px;
	color: #444;
}

.marktype span {
	flex: 1;
	margin-left: 14px;
}

.marktype b {
	width: 36px;
	height: 100%;
	display: flex;
	align-items: center;
	justify-content: center;
	border-left: 2px solid #e2e2e2;
}

.markgrid {
	margin-top: 12px;
	display: grid;
	grid-template-columns: 86px 84px 86px;
	grid-auto-rows: 84px;
	gap: 12px;
}

.mbtn {
	display: flex;
	flex-direction: column;
	align-items: center;
	border: 2px solid #d4d4d4;
	padding-top: 11px;
	font-size: 20px;
	line-height: 28px;
	color: #333;
}

.mbtn svg {
	height: 30px;
	margin-bottom: 9px;
}

.sheet {
	width: 2030px;
	margin-left: 12px;
	display: flex;
	flex-direction: column;
	gap: 12px;
}

.shelf {
	height: 56px;
	flex-shrink: 0;
	display: flex;
	align-items: center;
	border: 2px solid #d4d4d4;
	background-color: #fbfbfb;
}

.shelfname {
	width: 247px;
	height: 100%;
	display: flex;
	align-items: center;
	padding-left: 13px;
	background-color: #f7f7f7;
	border-right: 2px solid #e8e8e8;
	font-size: 24px;
	color: #444;
}

.shelfname span {
	margin-left: 14px;
}

.pill {
	width: 295px;
	height: 40px;
	margin-left: 8px;
	padding-left: 21px;
	border-radius: 20px;
	background-color: #00b180;
	font-size: 24px;
	line-height: 38px;
	color: #fff;
}

.viz {
	height: 1314px;
	border: 2px solid #d4d4d4;
	background-color: #fff;
}

.viztitle {
	height: 84px;
	padding: 20px 0 0 21px;
	font-size: 41.5px;
	font-weight: 300;
	line-height: 56px;
	color: #333;
}

.chart {
	display: block;
}

.chart text {
	font-family: "Noto Sans", "Liberation Sans", sans-serif;
}

.grid path {
	fill: none;
	stroke: #f1f1f1;
	stroke-width: 2;
}

.bars rect {
	fill: #4e78a6;
	stroke: #c8ccd0;
	stroke-width: 2;
}

.barbase {
	fill: none;
	stroke: #fff;
	stroke-width: 3;
}

.yticks text {
	font-size: 24px;
	fill: #666;
	text-anchor: end;
}

.ytitle {
	font-size: 24px;
	fill: #333;
	text-anchor: middle;
}

.band {
	fill: #8cc2d3;
}

.ticks {
	stroke: #333;
	stroke-width: 2;
	fill: none;
}

.xticks text {
	font-size: 24px;
	fill: #333;
	text-anchor: middle;
}

.xtitle {
	font-size: 24px;
	font-weight: 500;
	fill: #2a2a2a;
	text-anchor: middle;
}

.track {
	fill: #fafafa;
	stroke: #f0f0f0;
	stroke-width: 2;
}

.thumb {
	fill: #7e7e7e;
}

/* sheet tabs */
.tabbar {
	height: 60px;
	display: flex;
	background-color: #e5e5e5;
	border-top: 2px solid #cfcfcf;
	border-bottom: 2px solid #d2d2d2;
}

.tab {
	height: 100%;
	display: flex;
	align-items: center;
	border-right: 2px solid #cfcfcf;
	font-size: 23.5px;
	color: #666;
	white-space: nowrap;
}

.t-ds {
	width: 261px;
	padding-left: 20px;
}

.t-ds svg {
	margin-right: 11px;
}

.t-bar {
	width: 230px;
	padding-left: 13px;
}

.t-scatter {
	width: 249px;
	padding-left: 9px;
}

.t-hist {
	width: 236px;
	padding-left: 12px;
	background-color: #fbfbfb;
	font-size: 23px;
	font-weight: 700;
}

.t-add {
	width: 64px;
	justify-content: center;
}

/* status bar */
.status {
	height: 40px;
	display: flex;
	align-items: center;
	background-color: #ebebeb;
	font-size: 20.5px;
	color: #333;
}

.st-text {
	width: 2108px;
	padding-left: 25px;
	white-space: nowrap;
}

.s1 {
	display: inline-block;
	width: 107px;
}

.s2 {
	display: inline-block;
	width: 198px;
}

.cell {
	height: 100%;
	border-left: 2px solid #d0d0d0;
}

.c189 { width: 189px; }
.c54 { width: 54px; }
.c94 { width: 94px; }
.c142 { width: 142px; }

.pager {
	display: flex;
	align-items: center;
	justify-content: space-around;
	padding: 0 8px 0 8px;
}

.views {
	flex: 1;
	height: 100%;
	display: flex;
	align-items: center;
	gap: 20px;
	padding-left: 18px;
	border-left: 2px solid #d0d0d0;
}
```
